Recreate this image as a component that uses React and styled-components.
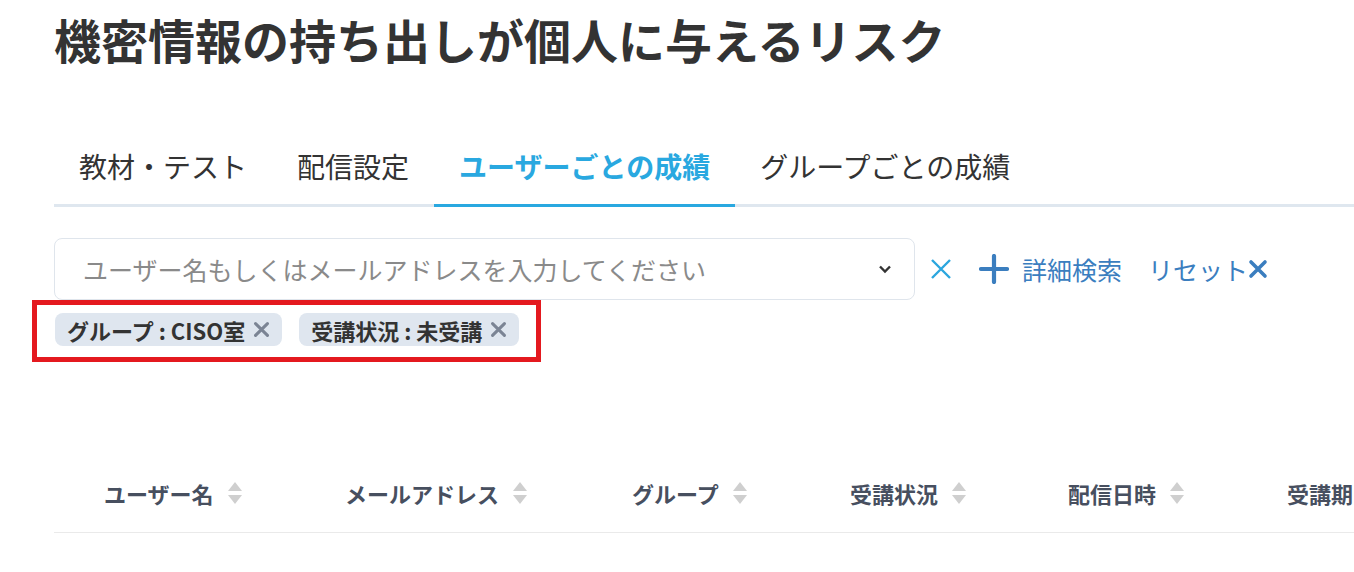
import React, { useState } from "react";
import styled, { createGlobalStyle } from "styled-components";

const GlobalStyle = createGlobalStyle`
  html, body {
    margin: 0;
    padding: 0;
    background: #ffffff;
    overflow: hidden;
  }
  body {
    font-family: "Noto Sans CJK JP", "Noto Sans", sans-serif;
    color: #333333;
  }
`;

const Page = styled.div`
  width: 100vw;
  padding-left: 54px;
  box-sizing: border-box;
  overflow: hidden;
`;

const Title = styled.h1`
  margin: 0;
  padding-top: 8px;
  font-size: 47px;
  font-weight: 700;
  line-height: 62px;
  color: #333333;
  white-space: nowrap;
`;

const TabBar = styled.div`
  display: flex;
  margin-top: 63px;
  border-bottom: 3px solid #dfe7ef;
`;

const Tab = styled.div`
  padding: 0 25px 6px;
  height: 74px;
  box-sizing: border-box;
  display: flex;
  align-items: center;
  font-size: 28px;
  font-weight: ${(p) => (p.active ? 700 : 400)};
  color: ${(p) => (p.active ? "#29a8e0" : "#333333")};
  border-bottom: 3px solid ${(p) => (p.active ? "#29a8e0" : "transparent")};
  margin-bottom: -3px;
  white-space: nowrap;
  cursor: pointer;
`;

const SearchRow = styled.div`
  display: flex;
  align-items: center;
  margin-top: 31px;
`;

const SearchBox = styled.div`
  width: 861px;
  height: 62px;
  box-sizing: border-box;
  border: 1px solid #dfe5ec;
  border-radius: 8px;
  display: flex;
  align-items: center;
  padding: 0 22px 0 28px;
`;

const SearchInput = styled.input`
  flex: 1;
  border: none;
  outline: none;
  font-family: inherit;
  font-size: 25px;
  color: #333;
  background: transparent;
  padding: 0;
  &::placeholder {
    color: #8a8a8a;
  }
`;

const IconButton = styled.button`
  border: none;
  background: none;
  padding: 0;
  display: flex;
  align-items: center;
  cursor: pointer;
  color: ${(p) => p.color};
  margin-left: ${(p) => p.gap}px;
`;

const LinkButton = styled.button`
  border: none;
  background: none;
  padding: 0;
  display: flex;
  align-items: center;
  gap: ${(p) => p.gap || 0}px;
  cursor: pointer;
  font-family: inherit;
  font-size: 25px;
  color: #3b7ebf;
  margin-left: ${(p) => p.offset}px;
  white-space: nowrap;
`;

const ChipRow = styled.div`
  display: flex;
  gap: 17px;
  width: fit-content;
  margin-left: -22px;
  padding: 8px 17px 11px 18px;
  border: 5px solid #e4191f;
`;

const Chip = styled.div`
  display: flex;
  align-items: center;
  gap: 8px;
  height: 33px;
  padding: 0 12px 0 12px;
  background: #dfe6ef;
  border-radius: 8px;
  font-size: 22px;
  font-weight: 700;
  color: #333333;
  white-space: pre;
`;

const HeaderRow = styled.div`
  display: grid;
  grid-template-columns: 241px 287px 218px 218px 219px 218px;
  height: 78px;
  margin-top: 92px;
  border-bottom: 1px solid #eaeaea;
  align-items: center;
`;

const HeaderCell = styled.div`
  display: flex;
  align-items: center;
  gap: 14px;
  padding-left: 50px;
  font-size: 22px;
  font-weight: 700;
  color: #474f5f;
  white-space: nowrap;
`;

const Chevron = () => (
  <svg width="14" height="10" viewBox="0 0 14 10">
    <path d="M2 2.5 L7 7.5 L12 2.5" fill="none" stroke="#333" strokeWidth="2.4" />
  </svg>
);

const ThinX = ({ size = 22 }) => (
  <svg width={size} height={size} viewBox="0 0 22 22">
    <path d="M2 2 L20 20 M20 2 L2 20" stroke="currentColor" strokeWidth="2.4" />
  </svg>
);

const Plus = () => (
  <svg width="30" height="30" viewBox="0 0 30 30">
    <path d="M15 2 V28 M2 15 H28" stroke="currentColor" strokeWidth="4.2" strokeLinecap="round" />
  </svg>
);

const BoldX = ({ size = 20, color }) => (
  <svg width={size} height={size} viewBox="0 0 20 20">
    <path d="M3 3 L17 17 M17 3 L3 17" stroke={color} strokeWidth="3.6" strokeLinecap="round" />
  </svg>
);

const SortIcon = () => (
  <svg width="14" height="24" viewBox="0 0 14 24">
    <path d="M7 1 L14 10 H0 Z" fill="#cfcfcf" />
    <path d="M0 14 H14 L7 23 Z" fill="#cfcfcf" />
  </svg>
);

const tabs = ["教材・テスト", "配信設定", "ユーザーごとの成績", "グループごとの成績"];
const columns = ["ユーザー名", "メールアドレス", "グループ", "受講状況", "配信日時", "受講期限"];
const filters = ["グループ : CISO室", "受講状況 : 未受講"];

const App = () => {
  const [active, setActive] = useState(2);

  return (
    <Page>
      <GlobalStyle />
      <Title>機密情報の持ち出しが個人に与えるリスク</Title>

      <TabBar>
        {tabs.map((t, i) => (
          <Tab key={t} active={i === active} onClick={() => setActive(i)}>
            {t}
          </Tab>
        ))}
      </TabBar>

      <SearchRow>
        <SearchBox>
          <SearchInput placeholder="ユーザー名もしくはメールアドレスを入力してください" />
          <Chevron />
        </SearchBox>
        <IconButton color="#2ba6de" gap={15}>
          <ThinX />
        </IconButton>
        <LinkButton offset={27} gap={13}>
          <span style={{ display: "flex", color: "#3b7ebf" }}>
            <Plus />
          </span>
          詳細検索
        </LinkButton>
        <LinkButton offset={26}>
          リセット
          <BoldX color="#3b7ebf" />
        </LinkButton>
      </SearchRow>

      <ChipRow>
        {filters.map((f) => (
          <Chip key={f}>
            {f}
            <BoldX size={17} color="#7b8494" />
          </Chip>
        ))}
      </ChipRow>

      <HeaderRow>
        {columns.map((c) => (
          <HeaderCell key={c}>
            {c}
            <SortIcon />
          </HeaderCell>
        ))}
      </HeaderRow>
    </Page>
  );
};

export default App;
